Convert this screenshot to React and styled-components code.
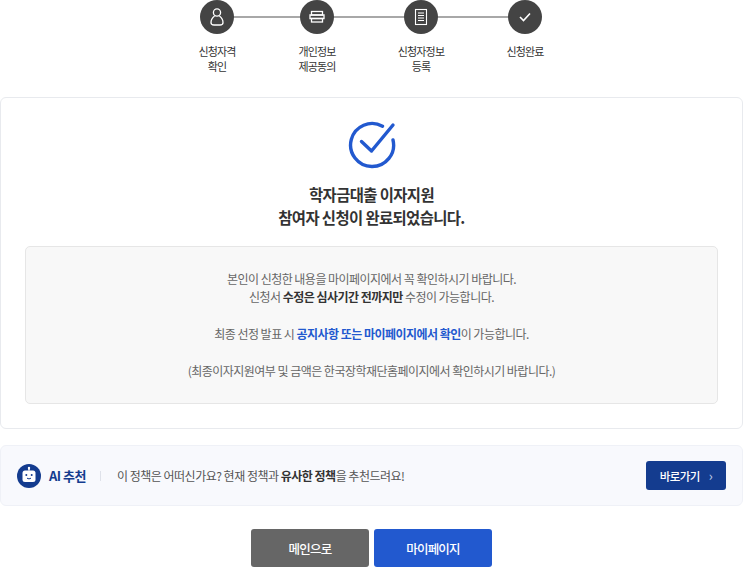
import React from 'react'
import styled, { createGlobalStyle } from 'styled-components'

const steps = [
  { label: ['신청자격', '확인'], icon: 'person', width: 100 },
  { label: ['개인정보', '제공동의'], icon: 'stack', width: 100 },
  { label: ['신청자정보', '등록'], icon: 'doc', width: 108 },
  { label: ['신청완료'], icon: 'check', width: 100 },
]

const StepIcon = ({ type }) => {
  if (type === 'person') {
    return (
      <svg width="18" height="20" viewBox="0 0 18 20" fill="none" stroke="#fff" strokeWidth="1.3">
        <circle cx="9" cy="5.5" r="3.6" />
        <path d="M6.6 9 C4.5 10.5 3 13 3 15.5 C3 17.5 4.5 18 6 18 H12 C13.5 18 15 17.5 15 15.5 C15 13 13.5 10.5 11.4 9" />
      </svg>
    )
  }
  if (type === 'stack') {
    return (
      <svg width="18" height="16" viewBox="0 0 18 16" fill="none" stroke="#fff" strokeWidth="1.3">
        <rect x="3.5" y="2.5" width="11" height="3.5" />
        <path d="M2 6 H16 V9.5 H2 Z" />
        <rect x="3.5" y="9.5" width="11" height="3.5" />
      </svg>
    )
  }
  if (type === 'doc') {
    return (
      <svg width="16" height="18" viewBox="0 0 16 18" fill="none" stroke="#fff" strokeWidth="1.1">
        <rect x="2.5" y="1.5" width="11" height="15" />
        <path d="M5 5 H11 M5 7.5 H11 M5 10 H11 M5 12.5 H11" />
      </svg>
    )
  }
  return (
    <svg width="14" height="12" viewBox="0 0 14 12" fill="none" stroke="#fff" strokeWidth="1.6">
      <path d="M2 6 L5.5 9.5 L12 2.5" />
    </svg>
  )
}

const App = () => {
  return (
    <Page>
      <GlobalStyle />
      <Stepper>
        <StepLine />
        {steps.map((s) => (
          <Step key={s.icon} $width={s.width}>
            <Circle><StepIcon type={s.icon} /></Circle>
            <StepLabel>
              {s.label.map((l) => <span key={l}>{l}</span>)}
            </StepLabel>
          </Step>
        ))}
      </Stepper>

      <Card>
        <DoneIcon width="50" height="50" viewBox="0 0 50 50" fill="none" stroke="#2259cf" strokeWidth="3.4" strokeLinecap="round" strokeLinejoin="round">
          <path d="M35.5 7.2 A21.5 21.5 0 1 0 46 21" />
          <path d="M14.5 22.5 L24.5 32 L46 6" />
        </DoneIcon>
        <Title>
          학자금대출 이자지원<br />
          참여자 신청이 완료되었습니다.
        </Title>
        <Notice>
          <p>
            본인이 신청한 내용을 마이페이지에서 꼭 확인하시기 바랍니다.<br />
            신청서 <Strong>수정은 심사기간 전까지만</Strong> 수정이 가능합니다.
          </p>
          <p>최종 선정 발표 시 <Accent>공지사항 또는 마이페이지에서 확인</Accent>이 가능합니다.</p>
          <p>(최종이자지원여부 및 금액은 한국장학재단홈페이지에서 확인하시기 바랍니다.)</p>
        </Notice>
      </Card>

      <AiBar>
        <Bot width="24" height="24" viewBox="0 0 24 24">
          <circle cx="12" cy="12" r="12" fill="#143c8f" />
          <rect x="11.2" y="3.5" width="1.6" height="3" fill="#fff" />
          <circle cx="12" cy="4" r="1.2" fill="#fff" />
          <rect x="5.5" y="6.5" width="13" height="11.5" rx="2.5" fill="#fff" />
          <circle cx="9.3" cy="11" r="1" fill="#143c8f" />
          <circle cx="14.7" cy="11" r="1" fill="#143c8f" />
          <path d="M10 14.2 Q12 15.6 14 14.2" stroke="#143c8f" strokeWidth="1" fill="none" />
        </Bot>
        <AiTitle>AI 추천</AiTitle>
        <Divider />
        <AiText>이 정책은 어떠신가요? 현재 정책과 <Strong>유사한 정책</Strong>을 추천드려요!</AiText>
        <GoButton>바로가기 <Chevron>›</Chevron></GoButton>
      </AiBar>

      <Actions>
        <ActionButton $color="#666666">메인으로</ActionButton>
        <ActionButton $color="#2259cf">마이페이지</ActionButton>
      </Actions>
    </Page>
  )
}

const GlobalStyle = createGlobalStyle`
    * { box-sizing: border-box; }
    html, body { margin: 0; background: #fff; }
    body {
        font-family: "Noto Sans CJK KR", "Noto Sans", sans-serif;
        color: #333;
        overflow: hidden;
    }
    p { margin: 0; }
`

const Page = styled.div`
    width: 743px;
    height: 568px;
    overflow: hidden;
`

const Stepper = styled.div`
    position: relative;
    display: flex;
    height: 97px;
    padding-left: 167px;
`

const StepLine = styled.div`
    position: absolute;
    top: 16px;
    left: 217px;
    width: 308px;
    height: 2px;
    background: #a8a8a8;
`

const Step = styled.div`
    position: relative;
    width: ${(p) => p.$width}px;
    display: flex;
    flex-direction: column;
    align-items: center;
`

const Circle = styled.div`
    width: 34px;
    height: 34px;
    border-radius: 50%;
    background: #444444;
    display: flex;
    align-items: center;
    justify-content: center;
`

const StepLabel = styled.div`
    margin-top: 10px;
    display: flex;
    flex-direction: column;
    align-items: center;
    font-size: 11px;
    line-height: 14.5px;
    letter-spacing: -0.85px;
    color: #333;
`

const Card = styled.div`
    height: 332px;
    border: 1px solid #e8eaee;
    border-radius: 6px;
    display: flex;
    flex-direction: column;
    align-items: center;
    padding: 21px 24px 0;
`

const DoneIcon = styled.svg`
    display: block;
`

const Title = styled.h2`
    margin: 14px 0 0;
    font-size: 15.4px;
    line-height: 23px;
    font-weight: 700;
    letter-spacing: -0.6px;
    text-align: center;
    color: #333;
`

const Notice = styled.div`
    margin-top: 17px;
    width: 100%;
    height: 158px;
    padding: 23px 0 0;
    background: #f8f8f8;
    border: 1px solid #e6e6e6;
    border-radius: 5px;
    display: flex;
    flex-direction: column;
    gap: 18.4px;
    font-size: 12px;
    line-height: 18.4px;
    letter-spacing: -0.53px;
    text-align: center;
    color: #666;
`

const Strong = styled.strong`
    font-weight: 700;
    color: #333;
`

const Accent = styled.strong`
    font-weight: 700;
    color: #2259cf;
`

const AiBar = styled.div`
    margin-top: 16px;
    height: 61px;
    padding: 0 16px;
    background: #f8f9fd;
    border: 1px solid #eff1f7;
    border-radius: 6px;
    display: flex;
    align-items: center;
`

const Bot = styled.svg`
    flex: none;
`

const AiTitle = styled.span`
    margin-left: 8px;
    font-size: 13px;
    font-weight: 700;
    letter-spacing: -0.5px;
    color: #143c8f;
`

const Divider = styled.span`
    width: 1px;
    height: 10px;
    margin: 0 16px 0 14px;
    background: #dfe2ea;
`

const AiText = styled.span`
    flex: 1;
    font-size: 12px;
    letter-spacing: -0.5px;
    color: #555;
`

const GoButton = styled.button`
    width: 80px;
    height: 29px;
    padding: 0;
    border: none;
    border-radius: 3px;
    background: #143c8f;
    color: #fff;
    font: inherit;
    font-size: 11.5px;
    font-weight: 500;
    letter-spacing: -0.6px;
`

const Chevron = styled.span`
    margin-left: 7px;
    font-size: 13px;
    color: #b9c6e4;
`

const Actions = styled.div`
    margin-top: 23px;
    display: flex;
    justify-content: center;
    gap: 5px;
`

const ActionButton = styled.button`
    width: 118px;
    height: 38px;
    padding: 0;
    border: none;
    border-radius: 3px;
    background: ${(p) => p.$color};
    color: #fff;
    font: inherit;
    font-size: 12.5px;
    font-weight: 500;
    letter-spacing: -0.8px;
`

export default App
